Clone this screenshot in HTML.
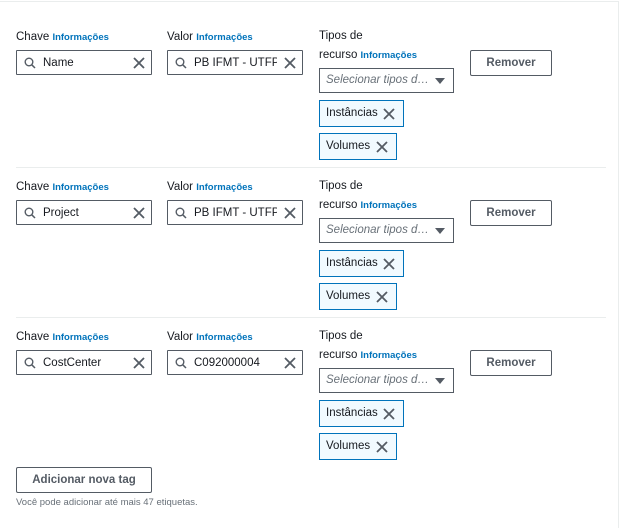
<!DOCTYPE html>
<html><head><style>
*{box-sizing:border-box;margin:0;padding:0}
body{width:622px;height:528px;background:#fff;font-family:"Liberation Sans",sans-serif;color:#16191f;position:relative;overflow:hidden}
.a{position:absolute}
.lbl{font-size:11.5px;color:#16191f;white-space:nowrap}
.info{color:#0073bb;font-weight:bold;font-size:9.5px}
.inp{border:1px solid #545b64;border-radius:1px;height:25px;width:136px;font-size:11.5px;display:flex;align-items:center;padding-left:7px;white-space:nowrap;overflow:hidden}
.inp .t{margin-left:7px;width:83px;overflow:hidden}
.x{position:absolute;right:6px;top:6px}
.sel{border:1px solid #545b64;width:135px;height:25px;font-size:11.5px;font-style:italic;color:#687078;padding-left:6px;line-height:23px}
.chip{border:1px solid #0073bb;background:#f1faff;height:27px;font-size:11.5px;padding-left:6px;line-height:25px}
.btn{border:1px solid #545b64;border-radius:2px;height:26px;font-size:11.5px;font-weight:bold;color:#545b64;text-align:center;line-height:24px}
.hr{height:1px;background:#eaeded}
</style></head><body>
<div class="a hr" style="left:0;top:1px;width:619px"></div>
<div class="a" style="left:618px;top:1px;width:1px;height:527px;background:#eaeded"></div>
<div class="a hr" style="left:16px;top:167px;width:590px"></div>
<div class="a hr" style="left:16px;top:317px;width:590px"></div>

<div id="rows"></div>
<script>
var data=[["Name","PB IFMT - UTFPR"],["Project","PB IFMT - UTFPR"],["CostCenter","C092000004"]];
var X='<svg class="x" width="12" height="12" viewBox="0 0 12 12"><path d="M1 1L11 11M11 1L1 11" stroke="#545b64" stroke-width="1.8"/></svg>';
var S='<svg width="12" height="12" viewBox="0 0 12 12"><circle cx="5" cy="5" r="3.8" fill="none" stroke="#545b64" stroke-width="1.4"/><path d="M7.8 7.8L11 11" stroke="#545b64" stroke-width="1.5"/></svg>';
var h='';
data.forEach(function(d,i){var y=i*150;
h+='<div class="a lbl" style="left:16px;top:'+(31+y)+'px">Chave <span class="info">Informações</span></div>';
h+='<div class="a lbl" style="left:167px;top:'+(31+y)+'px">Valor <span class="info">Informações</span></div>';
h+='<div class="a inp" style="left:16px;top:'+(50+y)+'px">'+S+'<span class="t">'+d[0]+'</span>'+X+'</div>';
h+='<div class="a inp" style="left:167px;top:'+(50+y)+'px">'+S+'<span class="t">'+d[1]+'</span>'+X+'</div>';
h+='<div class="a lbl" style="left:319px;top:'+(30+y)+'px">Tipos de</div>';
h+='<div class="a lbl" style="left:319px;top:'+(49+y)+'px">recurso <span class="info">Informações</span></div>';
h+='<div class="a sel" style="left:319px;top:'+(68+y)+'px">Selecionar tipos d…<span style="position:absolute;right:8px;top:9px;width:0;height:0;border-left:5px solid transparent;border-right:5px solid transparent;border-top:6px solid #545b64"></span></div>';
h+='<div class="a chip" style="left:319px;top:'+(100+y)+'px;width:85px">Instâncias'+X.replace('class="x"','class="x" style="top:7px;right:8px"')+'</div>';
h+='<div class="a chip" style="left:319px;top:'+(133+y)+'px;width:78px">Volumes'+X.replace('class="x"','class="x" style="top:7px;right:8px"')+'</div>';
h+='<div class="a btn" style="left:470px;top:'+(50+y)+'px;width:82px">Remover</div>';
});
document.getElementById('rows').innerHTML=h;
</script>
<div class="a btn" style="left:16px;top:467px;width:136px">Adicionar nova tag</div>
<div class="a" style="left:16px;top:497px;font-size:9.5px;color:#687078">Você pode adicionar até mais 47 etiquetas.</div>
</body></html>
